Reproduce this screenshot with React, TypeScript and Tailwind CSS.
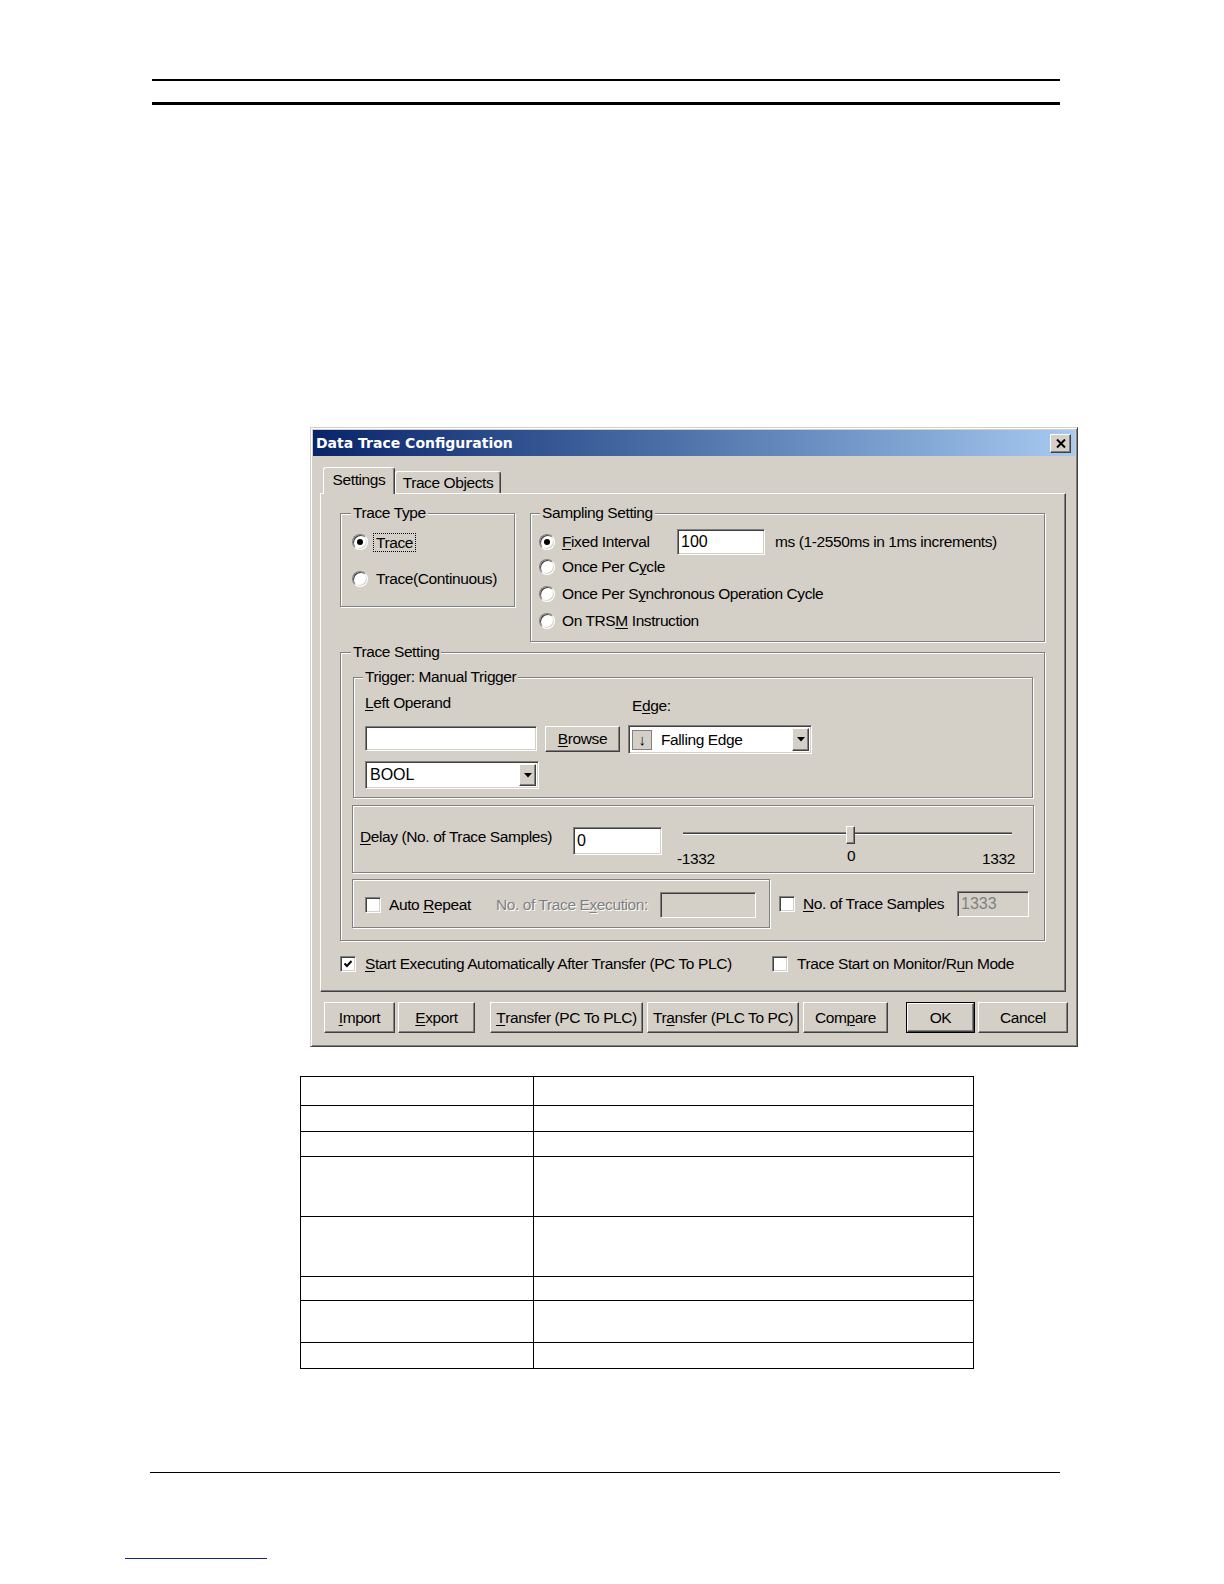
import React from "react";

// Win2000-style dialog pieces
const FACE = "font-['Liberation_Sans',Arial,sans-serif]";
const sunkenEdge =
  "border border-t-[#808080] border-l-[#808080] border-r-white border-b-white shadow-[inset_1px_1px_0_#404040,inset_-1px_-1px_0_#d4d0c8]";
const raised =
  "bg-[#d4d0c8] border border-t-white border-l-white border-r-[#404040] border-b-[#404040] shadow-[inset_-1px_-1px_0_#808080]";
const etched = "border border-[#808080] shadow-[1px_1px_0_#fff,inset_1px_1px_0_#fff]";
const VALUE = "text-[16px] tracking-normal";

function U({ children }: { children: React.ReactNode }) {
  return <span className="underline decoration-1 underline-offset-[2px]">{children}</span>;
}

function Radio({ checked = false }: { checked?: boolean }) {
  return (
    <span className="flex h-[16px] w-[16px] shrink-0 items-center justify-center rounded-full border border-t-[#808080] border-l-[#808080] border-r-white border-b-white bg-white shadow-[inset_1px_1px_0_#404040,inset_-1px_-1px_0_#d4d0c8]">
      {checked && <span className="h-[6px] w-[6px] rounded-full bg-black" />}
    </span>
  );
}

function Check({ checked = false }: { checked?: boolean }) {
  return (
    <span className={`flex h-[16px] w-[16px] shrink-0 items-center justify-center bg-white ${sunkenEdge}`}>
      {checked && (
        <svg width="10" height="10" viewBox="0 0 10 10">
          <path d="M1.5 4.5 L4 7 L8.5 2" fill="none" stroke="#000" strokeWidth="2" />
        </svg>
      )}
    </span>
  );
}

function DropBtn() {
  return (
    <span className={`flex w-[17px] shrink-0 items-center justify-center self-stretch ${raised}`}>
      <svg width="8" height="5" viewBox="0 0 8 5">
        <path d="M0 0H8L4 4.5Z" fill="#000" />
      </svg>
    </span>
  );
}

function Group({
  label,
  className,
  legend = "ml-[10px]",
  children,
}: {
  label: string;
  className: string;
  legend?: string;
  children: React.ReactNode;
}) {
  return (
    <fieldset className={`${etched} ${className}`}>
      <legend className={`${legend} whitespace-nowrap bg-[#d4d0c8] px-[2px] leading-[18px]`}>{label}</legend>
      {children}
    </fieldset>
  );
}

function Btn({ w, children }: { w: string; children: React.ReactNode }) {
  return <div className={`flex items-center justify-center whitespace-nowrap ${raised} ${w}`}>{children}</div>;
}

function Dialog() {
  return (
    <div
      className={`ml-[310px] mt-[322px] flex h-[620px] w-[768px] flex-col whitespace-nowrap border border-t-[#d4d0c8] border-l-[#d4d0c8] border-r-[#404040] border-b-[#404040] bg-[#d4d0c8] p-[2px] text-[15.5px] leading-[18px] tracking-[-0.4px] text-black shadow-[inset_1px_1px_0_#fff,inset_-1px_-1px_0_#808080] ${FACE}`}
    >
      {/* title bar */}
      <div className="flex h-[26px] shrink-0 items-center justify-between bg-linear-to-r from-[#0a246a] to-[#a6caf0] pl-[3px] pr-[4px]">
        <span className="font-['DejaVu_Sans',sans-serif] text-[14px] font-bold tracking-normal text-white">Data Trace Configuration</span>
        <span className={`flex h-[19px] w-[21px] items-center justify-center ${raised}`}>
          <svg width="10" height="9" viewBox="0 0 10 9">
            <path d="M1 0.5L9 8.5M9 0.5L1 8.5" stroke="#000" strokeWidth="2" />
          </svg>
        </span>
      </div>

      {/* tabs */}
      <div className="relative z-10 -mb-px mt-[11px] flex h-[27px] shrink-0 items-end pl-[10px]">
        <div className="flex h-[27px] w-[72px] items-center justify-center rounded-t-[3px] border border-b-0 border-t-white border-l-white border-r-[#404040] bg-[#d4d0c8] pb-[2px] shadow-[inset_-1px_0_0_#808080]">
          Settings
        </div>
        <div className="mb-px flex h-[22px] w-[106px] items-center justify-center rounded-t-[3px] border border-b-0 border-t-white border-l-white border-r-[#404040] bg-[#d4d0c8] shadow-[inset_-1px_0_0_#808080]">
          Trace Objects
        </div>
      </div>

      {/* tab panel */}
      <div className="ml-[7px] flex h-[499px] w-[746px] shrink-0 flex-col border border-t-white border-l-white border-r-[#404040] border-b-[#404040] pl-[19px] pt-[10px] shadow-[inset_-1px_-1px_0_#808080]">
        <div className="flex h-[138px] items-start gap-[15px]">
          <Group label="Trace Type" className="h-[103px] w-[175px]">
            <div className="flex flex-col pl-[11px] pt-[10px]">
              <div className="flex h-[20px] items-center">
                <Radio checked />
                <span className="ml-[5px] border border-dotted border-black px-[2px] leading-[17px]">Trace</span>
              </div>
              <div className="mt-[17px] flex h-[20px] items-center">
                <Radio />
                <span className="ml-[8px]">Trace(Continuous)</span>
              </div>
            </div>
          </Group>

          <Group label="Sampling Setting" className="h-[138px] w-[515px]" legend="ml-[9px]">
            <div className="flex flex-col pl-[8px]">
              <div className="mt-[7px] flex h-[26px] items-center">
                <Radio checked />
                <span className="ml-[7px] w-[115px]">
                  <U>F</U>ixed Interval
                </span>
                <span className={`flex h-[26px] w-[88px] items-center bg-white pl-[3px] ${sunkenEdge} ${VALUE}`}>100</span>
                <span className="ml-[10px]">ms (1-2550ms in 1ms increments)</span>
              </div>
              <div className="mt-[2px] flex h-[20px] items-center">
                <Radio />
                <span className="ml-[7px]">
                  Once Per C<U>y</U>cle
                </span>
              </div>
              <div className="mt-[7px] flex h-[20px] items-center">
                <Radio />
                <span className="ml-[7px]">
                  Once Per S<U>y</U>nchronous Operation Cycle
                </span>
              </div>
              <div className="mt-[7px] flex h-[20px] items-center">
                <Radio />
                <span className="ml-[7px]">
                  On TRS<U>M</U> Instruction
                </span>
              </div>
            </div>
          </Group>
        </div>

        <Group label="Trace Setting" className="mt-px h-[298px] w-[705px]">
          <div className="flex flex-col pl-[12px]">
            <Group label="Trigger: Manual Trigger" className="mt-[7px] h-[130px] w-[680px]" legend="ml-[9px]">
              <div className="flex flex-col pl-[11px]">
                <div className="mt-[8px] flex h-[18px]">
                  <span className="w-[267px]">
                    <U>L</U>eft Operand
                  </span>
                  <span className="mt-[3px]">
                    E<U>d</U>ge:
                  </span>
                </div>
                <div className="mt-[13px] flex items-start">
                  <span className={`mt-px h-[25px] w-[172px] bg-white ${sunkenEdge}`} />
                  <span className={`ml-[8px] mt-px flex h-[26px] w-[75px] items-center justify-center ${raised}`}>
                    <U>B</U>rowse
                  </span>
                  <span className={`ml-[8px] flex h-[29px] w-[184px] items-center bg-white p-[2px] ${sunkenEdge}`}>
                    <span className="ml-px flex h-[20px] w-[20px] items-center justify-center border border-[#808080] bg-[#d4d0c8] text-[15px]">
                      ↓
                    </span>
                    <span className="ml-[9px] flex-1">Falling Edge</span>
                    <DropBtn />
                  </span>
                </div>
                <div className="mt-[7px] flex">
                  <span className={`flex h-[28px] w-[174px] items-center bg-white p-[2px] ${sunkenEdge}`}>
                    <span className={`ml-[2px] flex-1 ${VALUE}`}>BOOL</span>
                    <DropBtn />
                  </span>
                </div>
              </div>
            </Group>

            {/* delay */}
            <div className={`-ml-px mt-[7px] flex h-[68px] w-[682px] ${etched}`}>
              <span className="ml-[7px] mt-[22px] h-[18px] w-[213px]">
                <U>D</U>elay (No. of Trace Samples)
              </span>
              <span className={`mt-[21px] flex h-[28px] w-[89px] items-center bg-white pl-[3px] ${sunkenEdge} ${VALUE}`}>0</span>
              <div className="relative ml-[15px] w-[340px]">
                <div className="ml-[6px] mt-[26px] h-[3px] w-[329px] border-y border-t-[#808080] border-b-white bg-[#404040]" />
                <div className={`absolute left-[169px] top-[20px] h-[18px] w-[9px] ${raised}`} />
                <div className="mt-[15px] flex justify-between pr-[2px]">
                  <span>-1332</span>
                  <span>1332</span>
                </div>
                <span className="absolute left-[170px] top-[41px]">0</span>
              </div>
            </div>

            {/* repeat / samples */}
            <div className="-ml-px mt-[6px] flex items-start">
              <div className={`flex h-[49px] w-[418px] items-center pl-[12px] pt-[3px] ${etched}`}>
                <Check />
                <span className="ml-[8px] w-[107px]">
                  Auto <U>R</U>epeat
                </span>
                <span className="w-[164px] text-[#808080] [text-shadow:1px_1px_0_#fff]">
                  No. of Trace E<U>x</U>ecution:
                </span>
                <span className={`h-[26px] w-[96px] bg-[#d4d0c8] ${sunkenEdge}`} />
              </div>
              <div className="ml-[9px] flex h-[49px] items-center">
                <Check />
                <span className="ml-[8px] w-[154px]">
                  <U>N</U>o. of Trace Samples
                </span>
                <span className={`flex h-[26px] w-[72px] items-center bg-[#d4d0c8] pl-[3px] text-[#808080] ${sunkenEdge} ${VALUE}`}>
                  1333
                </span>
              </div>
            </div>
          </div>
        </Group>

        <div className="mt-[13px] flex h-[20px] items-center">
          <Check checked />
          <span className="ml-[9px] w-[407px]">
            <U>S</U>tart Executing Automatically After Transfer (PC To PLC)
          </span>
          <Check />
          <span className="ml-[9px]">
            Trace Start on Monitor/R<U>u</U>n Mode
          </span>
        </div>
      </div>

      {/* buttons */}
      <div className="ml-[11px] mt-[10px] flex h-[31px]">
        <Btn w="w-[71px]">
          <U>I</U>mport
        </Btn>
        <Btn w="ml-[3px] w-[77px]">
          <U>E</U>xport
        </Btn>
        <Btn w="ml-[15px] w-[153px]">
          <U>T</U>ransfer (PC To PLC)
        </Btn>
        <Btn w="ml-[4px] w-[152px]">
          Tr<U>a</U>nsfer (PLC To PC)
        </Btn>
        <Btn w="ml-[4px] w-[85px]">
          Com<U>p</U>are
        </Btn>
        <div className="ml-[18px] flex w-[69px] border border-black">
          <Btn w="flex-1">OK</Btn>
        </div>
        <Btn w="ml-[3px] w-[90px]">Cancel</Btn>
      </div>
    </div>
  );
}

const ROWS = ["h-[29px]", "h-[26px]", "h-[25px]", "h-[60px]", "h-[60px]", "h-[24px]", "h-[42px]", "h-[26px]"];

export default function App() {
  return (
    <div className="flex min-h-[1584px] w-[1224px] flex-col bg-white">
      <div className="ml-[152px] mt-[79px] h-[2px] w-[908px] bg-black" />
      <div className="ml-[152px] mt-[21px] h-[3px] w-[908px] bg-black" />

      <Dialog />

      <table className="ml-[300px] mt-[29px] w-[674px] border-collapse">
        <tbody>
          {ROWS.map((h, i) => (
            <tr key={i} className={h}>
              <td className="w-[233px] border border-black p-0" />
              <td className="border border-black p-0" />
            </tr>
          ))}
        </tbody>
      </table>

      <div className="ml-[150px] mt-[103px] h-px w-[910px] bg-black" />
      <div className="ml-[125px] mt-[85px] h-px w-[142px] bg-[#1c1c8a]" />
    </div>
  );
}
